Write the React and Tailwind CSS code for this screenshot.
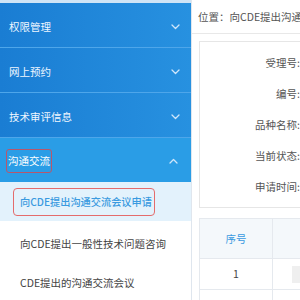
import React from "react";

const Chevron = ({ up }) => (
  <svg width="9" height="6" viewBox="0 0 9 6" className="shrink-0">
    <path
      d={up ? "M1 5 L4.5 1.5 L8 5" : "M1 1 L4.5 4.5 L8 1"}
      fill="none"
      stroke="#cfe6fb"
      strokeWidth="1.3"
      strokeLinecap="round"
      strokeLinejoin="round"
    />
  </svg>
);

const font = { fontFamily: '"Noto Sans CJK SC", "Noto Sans", sans-serif' };

export default function App() {
  const menus = ["权限管理", "网上预约", "技术审评信息"];
  const labels = ["受理号:", "编号:", "品种名称:", "当前状态:", "申请时间:"];
  return (
    <div className="flex w-[300px] h-[300px] overflow-hidden bg-white text-[10.5px]" style={font}>
      <div className="w-[192px] shrink-0 flex flex-col border-r border-[#dfe6ee]">
        <div className="h-[3px] bg-[#cfe4f6]" />
        <div className="bg-gradient-to-r from-[#1a7dd3] to-[#2791e0]">
          {menus.map((m) => (
            <div
              key={m}
              className="h-[45px] flex items-center justify-between pl-[9px] pr-[11px] pt-[4px] border-b border-[#4ea6ea] text-[#eef6ff]"
            >
              <span>{m}</span>
              <Chevron />
            </div>
          ))}
        </div>
        <div className="h-[45px] bg-[#2a9de6] flex items-center justify-between pl-[6px] pr-[13px] pt-[1px]">
          <span className="border-[1.5px] border-[#b8576c] rounded-[3px] px-[1px] h-[24px] flex items-center text-white">
            沟通交流
          </span>
          <Chevron up />
        </div>
        <div className="h-[39px] bg-[#e3f2fc] flex items-center pl-[13px]">
          <div className="w-[142px] h-[28px] border-[1.5px] border-[#e46c6c] rounded-[4px] flex items-center pl-[6px] text-[#3a9ae0] font-medium whitespace-nowrap text-[10.2px]">
            向CDE提出沟通交流会议申请
          </div>
        </div>
        <div className="h-[40px] flex items-center pl-[20px] pt-[6px] text-[#444] whitespace-nowrap">
          向CDE提出一般性技术问题咨询
        </div>
        <div className="h-[40px] flex items-center pl-[20px] pt-[6px] text-[#444] whitespace-nowrap">
          CDE提出的沟通交流会议
        </div>
      </div>
      <div className="flex-1 min-w-0 flex flex-col">
        <div className="h-[34px] shrink-0 flex items-center pl-[6px] border-b border-[#e8e8e8] text-[#555] whitespace-nowrap">
          位置：向CDE提出沟通交流会议申请
        </div>
        <div className="ml-[7px] mt-[7px] w-[300px] border border-[#e6e6e6] pt-[5px] pb-[5px] shrink-0">
          {labels.map((l) => (
            <div key={l} className="h-[31px] flex items-center">
              <div className="w-[100px] text-right text-[#555] whitespace-nowrap">{l}</div>
            </div>
          ))}
        </div>
        <div className="ml-[7px] mt-[10px] w-[300px] border border-[#e5e9ee] shrink-0">
          <div className="h-[40px] flex bg-[#f4f8fb] border-b border-[#e5e9ee]">
            <div className="w-[73px] border-r border-[#e5e9ee] flex items-center justify-center text-[#3a9ae0]">
              序号
            </div>
            <div className="flex-1" />
          </div>
          <div className="h-[31px] flex border-b border-[#e5e9ee]">
            <div className="w-[73px] border-r border-[#e5e9ee] flex items-center justify-center text-[#444]">
              1
            </div>
            <div className="flex-1 flex items-center pl-[19px]">
              <div className="w-[60px] h-[17px] bg-[#efefef]" />
            </div>
          </div>
          <div className="h-[31px] flex">
            <div className="w-[73px] border-r border-[#e5e9ee]" />
            <div className="flex-1" />
          </div>
        </div>
      </div>
    </div>
  );
}
